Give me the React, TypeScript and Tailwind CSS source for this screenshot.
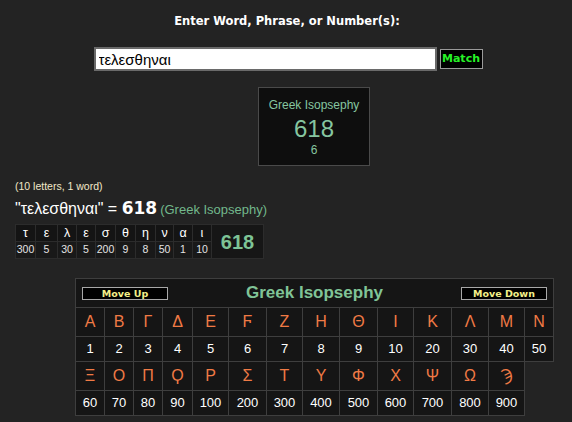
import React from 'react';

const row1 = [
  ['Α', 1], ['Β', 2], ['Γ', 3], ['Δ', 4], ['Ε', 5], ['Ϝ', 6], ['Ζ', 7],
  ['Η', 8], ['Θ', 9], ['Ι', 10], ['Κ', 20], ['Λ', 30], ['Μ', 40], ['Ν', 50],
] as const;

const row2 = [
  ['Ξ', 60], ['Ο', 70], ['Π', 80], ['Ϙ', 90], ['Ρ', 100], ['Σ', 200], ['Τ', 300],
  ['Υ', 400], ['Φ', 500], ['Χ', 600], ['Ψ', 700], ['Ω', 800], ['Ϡ', 900],
] as const;

const word = [
  ['τ', 300], ['ε', 5], ['λ', 30], ['ε', 5], ['σ', 200], ['θ', 9],
  ['η', 8], ['ν', 50], ['α', 1], ['ι', 10],
] as const;

const sans = "font-['Liberation_Sans','DejaVu_Sans',sans-serif]";
const verdana = "font-['DejaVu_Sans',sans-serif]";

function MoveButton({ label }: { label: string }) {
  return (
    <button
      className={`w-[86px] h-[13px] bg-black border border-[#a8a8a8] text-[#f4f08a] text-[9.5px] font-bold leading-[11px] ${verdana}`}
    >
      {label}
    </button>
  );
}

export default function App() {
  return (
    <div className={`min-h-[422px] w-[572px] bg-[#232323] text-white ${sans} pb-2`}>
      {/* Search */}
      <div className="pt-[14px] text-center">
        <div className={`text-[11.5px] font-bold leading-[14px] pl-[2px] ${verdana}`}>
          Enter Word, Phrase, or Number(s):
        </div>
        <div className="mt-[19px] flex justify-center items-center gap-[3px] pl-[4px]">
          <input
            readOnly
            value="τελεσθηναι"
            className="w-[343px] h-[24px] bg-white border-2 border-[#6a6a6a] px-[3px] text-[15px] text-black outline-none"
          />
          <button
            className={`w-[43px] h-[20px] bg-black border border-[#9a9a9a] text-[#27f227] text-[11px] font-bold leading-[16px] ${verdana}`}
          >
            Match
          </button>
        </div>
      </div>

      {/* Result box */}
      <div className="mt-[16px] ml-[258px] w-[112px] h-[79px] bg-[#0e0e0e] border border-[#4a4a4a] flex flex-col items-center text-[#86c6a0]">
        <div className="mt-[10px] text-[12px] leading-[14px]">Greek Isopsephy</div>
        <div className="mt-[4px] text-[24px] leading-[26px]">618</div>
        <div className="mt-[1px] text-[12px] leading-[14px]">6</div>
      </div>

      {/* Breakdown */}
      <div className="pl-[15px]">
        <div className="mt-[13px] text-[10.5px] leading-[14px] text-[#f2e8c8]">(10 letters, 1 word)</div>
        <div className="mt-[5px] flex items-baseline h-[20px] leading-[20px]">
          <span className="text-[16px]">"τελεσθηναι" =&nbsp;</span>
          <span className={`text-[17px] font-bold ${verdana}`}>618</span>
          <span className="ml-[3px] text-[13px] text-[#72b88c]">(Greek Isopsephy)</span>
        </div>
        <div className="mt-[6px] grid w-[249px] grid-cols-[20px_22px_19px_19px_20px_20px_20px_18px_19px_19px_52px] grid-rows-[17px_17px] border-l border-t border-[#2c2c2c]">
          {word.map(([l], i) => (
            <div
              key={'l' + i}
              className="flex items-center justify-center bg-[#141414] border-r border-b border-[#2c2c2c] text-[12.5px]"
              style={{ gridColumn: i + 1, gridRow: 1 }}
            >
              {l}
            </div>
          ))}
          <div
            className="flex items-center justify-center bg-[#161616] border-r border-b border-[#2c2c2c] text-[20px] font-bold text-[#7dc496]"
            style={{ gridColumn: 11, gridRow: '1 / span 2' }}
          >
            618
          </div>
          {word.map(([, v], i) => (
            <div
              key={'v' + i}
              className="flex items-center justify-center bg-[#191919] border-r border-b border-[#2c2c2c] text-[10.5px] text-[#e4e4e4]"
              style={{ gridColumn: i + 1, gridRow: 2 }}
            >
              {v}
            </div>
          ))}
        </div>
      </div>

      {/* Letter chart */}
      <div className="mt-[19px] ml-[75px] grid w-[479px] grid-cols-[29px_29px_29px_30px_36px_38px_36px_37px_38px_36px_38px_37px_36px_29px] grid-rows-[29px_29px_25px_29px_25px] border-l border-t border-[#3e3e3e]">
        <div className="col-span-14 flex items-center justify-between px-[6px] bg-[#151515] border-r border-b border-[#3e3e3e]">
          <MoveButton label="Move Up" />
          <span className="text-[17px] font-bold text-[#80c497] leading-[20px]">Greek Isopsephy</span>
          <MoveButton label="Move Down" />
        </div>
        {row1.map(([l]) => (
          <div key={'a' + l} className="flex items-center justify-center bg-[#151515] border-r border-b border-[#3e3e3e] text-[16px] text-[#f07a45]">
            {l}
          </div>
        ))}
        {row1.map(([l, v]) => (
          <div key={'b' + l} className="flex items-center justify-center bg-[#151515] border-r border-b border-[#3e3e3e] text-[13px]">
            {v}
          </div>
        ))}
        {row2.map(([l]) => (
          <div key={'c' + l} className="flex items-center justify-center bg-[#151515] border-r border-b border-[#3e3e3e] text-[16px] text-[#f07a45]">
            {l}
          </div>
        ))}
        <div />
        {row2.map(([l, v]) => (
          <div key={'d' + l} className="flex items-center justify-center bg-[#151515] border-r border-b border-[#3e3e3e] text-[13px]">
            {v}
          </div>
        ))}
      </div>
    </div>
  );
}
